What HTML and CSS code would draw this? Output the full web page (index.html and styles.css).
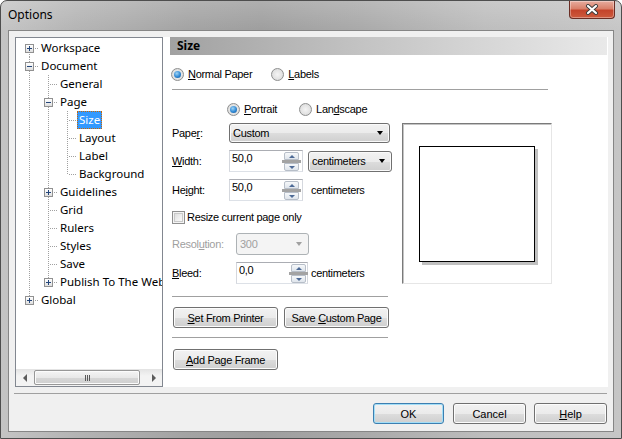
FILE: index.html
```html
<!DOCTYPE html>
<html>
<head>
  <meta charset="utf-8">
  <title>Options</title>
  <link rel="stylesheet" href="styles.css">
</head>
<body>
  <div class="window">
    <div class="titlebar">
      <span class="title">Options</span>
      <span class="close">
        <svg width="14" height="11" viewBox="0 0 14 11">
          <path d="M3 2 L11 9 M11 2 L3 9" stroke="#3b3b3b" stroke-width="4" stroke-linecap="round"/>
          <path d="M3 2 L11 9 M11 2 L3 9" stroke="#ffffff" stroke-width="2.2" stroke-linecap="round"/>
        </svg>
      </span>
    </div>
    <div class="client">
      <div class="main">
        <div class="tree">
          <div class="rows">
            <div class="row"><span class="cell start"><i class="exp plus"></i></span><span class="label">Workspace</span></div>
            <div class="row"><span class="cell tee"><i class="exp minus"></i></span><span class="label">Document</span></div>
            <div class="row"><span class="cell pipe"></span><span class="cell tee"></span><span class="label">General</span></div>
            <div class="row"><span class="cell pipe"></span><span class="cell tee"><i class="exp minus"></i></span><span class="label">Page</span></div>
            <div class="row"><span class="cell pipe"></span><span class="cell pipe"></span><span class="cell tee"></span><span class="label sel">Size</span></div>
            <div class="row"><span class="cell pipe"></span><span class="cell pipe"></span><span class="cell tee"></span><span class="label">Layout</span></div>
            <div class="row"><span class="cell pipe"></span><span class="cell pipe"></span><span class="cell tee"></span><span class="label">Label</span></div>
            <div class="row"><span class="cell pipe"></span><span class="cell pipe"></span><span class="cell elbow"></span><span class="label">Background</span></div>
            <div class="row"><span class="cell pipe"></span><span class="cell tee"><i class="exp plus"></i></span><span class="label">Guidelines</span></div>
            <div class="row"><span class="cell pipe"></span><span class="cell tee"></span><span class="label">Grid</span></div>
            <div class="row"><span class="cell pipe"></span><span class="cell tee"></span><span class="label">Rulers</span></div>
            <div class="row"><span class="cell pipe"></span><span class="cell tee"></span><span class="label">Styles</span></div>
            <div class="row"><span class="cell pipe"></span><span class="cell tee"></span><span class="label">Save</span></div>
            <div class="row"><span class="cell pipe"></span><span class="cell elbow"><i class="exp plus"></i></span><span class="label">Publish To The Web</span></div>
            <div class="row"><span class="cell elbow"><i class="exp plus"></i></span><span class="label">Global</span></div>
          </div>
          <div class="hscroll">
            <span class="sbtn"><i class="tri-l"></i></span>
            <span class="track"><span class="thumb"><i class="grip"></i></span></span>
            <span class="sbtn"><i class="tri-r"></i></span>
          </div>
        </div>

        <div class="panel">
          <div class="panel-head">Size</div>
          <div class="panel-body">
            <div class="radios top">
              <span class="opt"><span class="radio on"><i></i></span><span><u>N</u>ormal Paper</span></span>
              <span class="opt labels"><span class="radio"></span><span><u>L</u>abels</span></span>
            </div>
            <div class="rule wide"></div>
            <div class="cols">
              <div class="form">
                <div class="radios orient">
                  <span class="opt"><span class="radio on"><i></i></span><span><u>P</u>ortrait</span></span>
                  <span class="opt landscape"><span class="radio"></span><span>Lan<u>d</u>scape</span></span>
                </div>
                <div class="frow paper">
                  <span class="lbl">Pape<u>r</u>:</span>
                  <span class="select paper-sel"><span>Custom</span><i class="arrow"></i></span>
                </div>
                <div class="frow size-w">
                  <span class="lbl"><u>W</u>idth:</span>
                  <span class="field"><span class="val">50,0</span><span class="spin"><i class="up"></i><i class="mid"></i><i class="down"></i></span></span>
                  <span class="select unit-sel"><span>centimeters</span><i class="arrow"></i></span>
                </div>
                <div class="frow size-h">
                  <span class="lbl">He<u>i</u>ght:</span>
                  <span class="field"><span class="val">50,0</span><span class="spin"><i class="up"></i><i class="mid"></i><i class="down"></i></span></span>
                  <span class="unit">centimeters</span>
                </div>
                <div class="frow check-row">
                  <span class="check"></span><span>Resize current page only</span>
                </div>
                <div class="frow res">
                  <span class="lbl wide-lbl dim">Resol<u>u</u>tion:</span>
                  <span class="select off"><span>300</span><i class="arrow"></i></span>
                </div>
                <div class="frow bleed">
                  <span class="lbl wide-lbl"><u>B</u>leed:</span>
                  <span class="field bleed-field"><span class="val">0,0</span><span class="spin"><i class="up"></i><i class="mid"></i><i class="down"></i></span></span>
                  <span class="unit bleed-unit">centimeters</span>
                </div>
                <div class="rule r1"></div>
                <div class="btnrow">
                  <span class="btn"><span><u>S</u>et From Printer</span></span>
                  <span class="btn"><span>Save <u>C</u>ustom Page</span></span>
                </div>
                <div class="rule r2"></div>
                <div class="btnrow add">
                  <span class="btn"><span><u>A</u>dd Page Frame</span></span>
                </div>
              </div>
              <div class="preview"><div class="sheet"></div></div>
            </div>
          </div>
        </div>
      </div>
      <div class="sep"></div>
      <div class="dlg-buttons">
        <span class="btn dlg default"><span>OK</span></span>
        <span class="btn dlg cancel"><span>Cancel</span></span>
        <span class="btn dlg help"><span><u>H</u>elp</span></span>
      </div>
    </div>
  </div>
</body>
</html>
```

FILE: styles.css
```css
body {
  margin: 0;
  font-family: "Liberation Sans", Arial, sans-serif;
  font-size: 11px;
  color: #000000;
}

.window {
  width: 622px;
  height: 439px;
  box-sizing: border-box;
  border: 1px solid #4e4e4e;
  border-radius: 7px 7px 0 0;
  display: flex;
  flex-direction: column;
  background:
    linear-gradient(to bottom, rgba(255,255,255,0.18), rgba(255,255,255,0) 30px),
    linear-gradient(to right, #c4c4c4 0%, #b4b4b4 12%, #a3a3a3 30%, #9e9e9e 42%, #a9a9a9 58%, #bdbdbd 78%, #c6c6c6 100%);
}

/* title bar */
.titlebar {
  height: 29px;
  display: flex;
  justify-content: space-between;
  align-items: flex-start;
  padding-left: 7px;
}
.title {
  font-family: "Noto Sans", "Open Sans", sans-serif;
  font-size: 12px;
  line-height: 28px;
  color: #000000;
}
.close {
  width: 46px;
  height: 18px;
  box-sizing: border-box;
  margin-right: 6px;
  display: flex;
  align-items: center;
  justify-content: center;
  border: 1px solid #6a2d24;
  border-top: none;
  border-radius: 0 0 4px 4px;
  background: linear-gradient(to bottom, #e7ad9f 0%, #d9806a 45%, #c4442b 55%, #cd5a3d 100%);
  box-shadow: inset 0 0 0 1px rgba(255,255,255,0.35);
}

/* client area */
.client {
  flex: 1;
  margin: 0 7px 6px 7px;
  border: 1px solid #868686;
  background: #f0f0f0;
  padding: 6px 5px 0 6px;
  display: flex;
  flex-direction: column;
}
.main {
  height: 350px;
  display: flex;
}

/* tree */
.tree {
  --dv: repeating-linear-gradient(to bottom, #a0a0a0 0 1px, transparent 1px 2px);
  --dh: repeating-linear-gradient(to right, #a0a0a0 0 1px, transparent 1px 2px);
  width: 148px;
  box-sizing: border-box;
  border: 1px solid #828790;
  background: #ffffff;
  display: flex;
  flex-direction: column;
  overflow: hidden;
  font-family: "Noto Sans", "Open Sans", sans-serif;
  font-size: 11.5px;
}
.rows {
  flex: 1;
  padding: 1px 0 0 4px;
}
.row {
  display: flex;
  height: 18px;
  white-space: nowrap;
}
.cell {
  width: 19px;
  height: 18px;
  flex: none;
  display: flex;
  justify-content: center;
  align-items: flex-start;
}
.pipe {
  background: var(--dv) 9px 0 / 1px 18px no-repeat;
}
.tee {
  background: var(--dh) 11px 9px / 8px 1px no-repeat, var(--dv) 9px 0 / 1px 18px no-repeat;
}
.elbow {
  background: var(--dh) 11px 9px / 8px 1px no-repeat, var(--dv) 9px 0 / 1px 10px no-repeat;
}
.start {
  background: var(--dh) 11px 9px / 8px 1px no-repeat, var(--dv) 9px 9px / 1px 9px no-repeat;
}
.exp {
  width: 9px;
  height: 9px;
  box-sizing: border-box;
  margin-top: 5px;
  border: 1px solid #919191;
}
.exp.minus {
  background:
    linear-gradient(#24467a, #24467a) 1px 3px / 5px 1px no-repeat,
    linear-gradient(#ffffff, #dedede);
}
.exp.plus {
  background:
    linear-gradient(#24467a, #24467a) 1px 3px / 5px 1px no-repeat,
    linear-gradient(#24467a, #24467a) 3px 1px / 1px 5px no-repeat,
    linear-gradient(#ffffff, #dedede);
}
.label {
  padding: 0 2px;
  height: 18px;
  line-height: 18px;
}
.label.sel {
  background: #3399ff;
  color: #ffffff;
  outline: 1px dotted #cc6600;
  outline-offset: -1px;
}

.hscroll {
  height: 17px;
  flex: none;
  display: flex;
  background: linear-gradient(to bottom, #e3e3e3, #f3f3f3 40%, #f3f3f3);
}
.sbtn {
  width: 17px;
  display: flex;
  align-items: center;
  justify-content: center;
}
.tri-l {
  border-top: 4px solid transparent;
  border-bottom: 4px solid transparent;
  border-right: 4px solid #5c5c5c;
}
.tri-r {
  border-top: 4px solid transparent;
  border-bottom: 4px solid transparent;
  border-left: 4px solid #5c5c5c;
}
.track {
  flex: 1;
  display: flex;
  padding: 1px 0 1px 1px;
}
.thumb {
  width: 106px;
  box-sizing: border-box;
  border: 1px solid #979797;
  border-radius: 2px;
  display: flex;
  align-items: center;
  justify-content: center;
  background: linear-gradient(to bottom, #f4f4f4 0%, #e8e8e8 50%, #d6d6d6 51%, #d0d0d0 100%);
  box-shadow: inset 0 0 0 1px #fbfbfb;
}
.grip {
  width: 5px;
  height: 6px;
  background: repeating-linear-gradient(to right, #5a5a5a 0 1px, transparent 1px 2px);
}

/* right panel */
.panel {
  flex: 1;
  background: #ffffff;
  padding: 0 1px 0 7px;
  display: flex;
  flex-direction: column;
}
.panel-head {
  height: 18px;
  line-height: 18px;
  padding-left: 7px;
  font-family: "Noto Sans", "Open Sans", sans-serif;
  font-size: 12px;
  font-weight: bold;
  background: linear-gradient(to right, #a1a1a1 0%, #c4c4c4 45%, #e9e9e9 100%);
}
.panel-body {
  padding-left: 2px;
  letter-spacing: -0.3px;
}

.radios {
  display: flex;
  align-items: center;
  height: 16px;
}
.radios.top {
  margin: 11px 0 0 -1px;
}
.radios.orient {
  margin: 11px 0 0 55px;
}
.opt {
  display: flex;
  align-items: center;
  gap: 4px;
}
.opt.labels {
  margin-left: 19px;
}
.opt.landscape {
  margin-left: 22px;
}
.radio {
  width: 13px;
  height: 13px;
  box-sizing: border-box;
  border: 1px solid #8e8f8f;
  border-radius: 50%;
  display: flex;
  align-items: center;
  justify-content: center;
  background: radial-gradient(circle at 50% 50%, #f4f4f4 0%, #e2e2e2 60%, #cfcfcf 100%);
}
.radio.on i {
  width: 7px;
  height: 7px;
  border-radius: 50%;
  background: radial-gradient(circle at 40% 35%, #9fd4f5 0%, #2f88d4 55%, #15508f 100%);
}

.rule {
  height: 1px;
  background: #a0a0a0;
}
.rule.wide {
  width: 376px;
  margin-top: 7px;
}

.cols {
  display: flex;
  align-items: flex-start;
}
.form {
  width: 220px;
}

.frow {
  display: flex;
  align-items: center;
}
.lbl {
  width: 56px;
  flex: none;
}
.wide-lbl {
  width: 64px;
}
.dim {
  color: #a0a0a0;
}
.paper {
  margin-top: 6px;
  height: 20px;
}
.size-w {
  margin-top: 7px;
  height: 22px;
}
.size-h {
  margin-top: 7px;
  height: 22px;
}
.check-row {
  margin-top: 8px;
  height: 16px;
  gap: 2px;
}
.res {
  margin-top: 8px;
  height: 22px;
}
.bleed {
  margin-top: 7px;
  height: 22px;
}

.select {
  height: 100%;
  box-sizing: border-box;
  border: 1px solid #707070;
  border-radius: 3px;
  display: flex;
  align-items: center;
  justify-content: space-between;
  padding: 0 6px 0 3px;
  background: linear-gradient(to bottom, #f2f2f2 0%, #ebebeb 50%, #dddddd 51%, #cfcfcf 100%);
  box-shadow: inset 0 0 0 1px #fafafa;
}
.paper-sel {
  width: 161px;
  margin-left: 1px;
}
.unit-sel {
  width: 84px;
  height: 21px;
  margin-left: 5px;
}
.select.off {
  width: 73px;
  border-color: #adb2b5;
  background: #f4f4f4;
  box-shadow: none;
  color: #a0a0a0;
}
.arrow {
  border-left: 3.5px solid transparent;
  border-right: 3.5px solid transparent;
  border-top: 4px solid #000000;
}
.off .arrow {
  border-top-color: #a0a0a0;
}

.field {
  width: 74px;
  height: 100%;
  box-sizing: border-box;
  margin-left: 1px;
  border: 1px solid #abadb3;
  border-bottom-color: #dde1e7;
  border-left-color: #d5d8de;
  border-right-color: #d5d8de;
  background: #ffffff;
  display: flex;
  align-items: flex-start;
  justify-content: space-between;
}
.bleed-field {
  width: 72px;
  margin-left: 0;
}
.val {
  padding: 1px 0 0 2px;
}
.spin {
  width: 15px;
  margin: 1px 3px 0 0;
  display: flex;
  flex-direction: column;
  align-items: center;
}
.bleed-field .spin {
  margin-right: 1px;
}
.spin .up,
.spin .down {
  width: 15px;
  height: 8px;
  box-sizing: border-box;
  border: 1px solid #b7bec8;
  background: linear-gradient(to bottom, #f6f8fa, #dfe5ec);
  display: flex;
  align-items: center;
  justify-content: center;
}
.spin .up {
  border-radius: 2px 2px 0 0;
}
.spin .down {
  border-radius: 0 0 2px 2px;
}
.spin .up::before {
  content: "";
  border-left: 3px solid transparent;
  border-right: 3px solid transparent;
  border-bottom: 3px solid #4d6a96;
}
.spin .down::before {
  content: "";
  border-left: 3px solid transparent;
  border-right: 3px solid transparent;
  border-top: 3px solid #4d6a96;
}
.spin .mid {
  width: 19px;
  height: 3px;
  background: #a3a3a3;
}
.unit {
  margin-left: 8px;
}
.bleed-unit {
  margin-left: 3px;
}

.check {
  width: 13px;
  height: 13px;
  box-sizing: border-box;
  border: 1px solid #8f8f8f;
  background: linear-gradient(135deg, #d7d7d7 0%, #f2f2f2 60%, #ffffff 100%);
  box-shadow: inset 0 0 0 1px #f4f4f4, inset 0 0 0 2px #c9c9c9;
}

.rule.r1 {
  width: 216px;
  margin-top: 12px;
}
.rule.r2 {
  width: 216px;
  margin-top: 9px;
}
.btnrow {
  display: flex;
  gap: 6px;
  margin: 10px 0 0 1px;
}
.btnrow.add {
  margin-top: 11px;
}
.btn {
  width: 105px;
  height: 21px;
  box-sizing: border-box;
  border: 1px solid #707070;
  border-radius: 3px;
  display: flex;
  align-items: center;
  justify-content: center;
  white-space: pre;
  background: linear-gradient(to bottom, #f2f2f2 0%, #ebebeb 50%, #dddddd 51%, #cfcfcf 100%);
  box-shadow: inset 0 0 0 1px #fcfcfc;
}

.preview {
  width: 150px;
  height: 161px;
  box-sizing: border-box;
  margin: 33px 0 0 10px;
  border-top: 1px solid #7a7a7a;
  border-left: 1px solid #7a7a7a;
  border-right: 1px solid #e6e6e6;
  border-bottom: 1px solid #e6e6e6;
  box-shadow: inset 1px 1px 0 #c4c4c4;
  padding: 22px 0 0 16px;
}
.sheet {
  width: 116px;
  height: 116px;
  box-sizing: border-box;
  border: 1px solid #000000;
  background: #ffffff;
  box-shadow: 3px 3px 0 #c0c0c0;
}

/* bottom buttons */
.sep {
  height: 1px;
  background: #a0a0a0;
  margin: 6px 1px 0 -1px;
}
.dlg-buttons {
  display: flex;
  justify-content: flex-end;
  margin: 9px 1px 0 0;
}
.btn.dlg {
  width: 73px;
}
.btn.default {
  width: 71px;
  border-color: #3c7fb1;
  box-shadow: inset 0 0 0 1px #a3def7;
}
.btn.cancel {
  margin-left: 9px;
}
.btn.help {
  margin-left: 8px;
}
```
